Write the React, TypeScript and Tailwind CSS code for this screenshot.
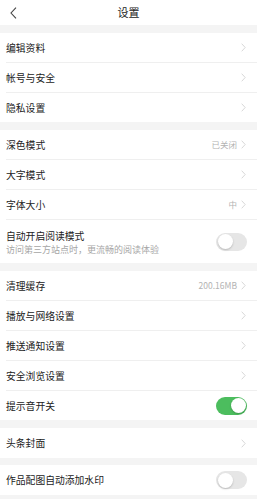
import { Fragment } from 'react'

type Row = {
  label: string
  sub?: string
  value?: string
  kind: 'arrow' | 'on' | 'off'
}

const groups: Row[][] = [
  [
    { label: '编辑资料', kind: 'arrow' },
    { label: '帐号与安全', kind: 'arrow' },
    { label: '隐私设置', kind: 'arrow' },
  ],
  [
    { label: '深色模式', value: '已关闭', kind: 'arrow' },
    { label: '大字模式', kind: 'arrow' },
    { label: '字体大小', value: '中', kind: 'arrow' },
    { label: '自动开启阅读模式', sub: '访问第三方站点时，更流畅的阅读体验', kind: 'off' },
  ],
  [
    { label: '清理缓存', value: '200.16MB', kind: 'arrow' },
    { label: '播放与网络设置', kind: 'arrow' },
    { label: '推送通知设置', kind: 'arrow' },
    { label: '安全浏览设置', kind: 'arrow' },
    { label: '提示音开关', kind: 'on' },
  ],
  [{ label: '头条封面', kind: 'arrow' }],
  [{ label: '作品配图自动添加水印', kind: 'off' }],
]

function Chevron() {
  return (
    <svg width="5" height="9" viewBox="0 0 5 9" fill="none" className="ml-[4px]">
      <path d="M0.7 0.7 L4.2 4.5 L0.7 8.3" stroke="#d4d4d4" strokeWidth="0.9" />
    </svg>
  )
}

function Toggle({ on }: { on: boolean }) {
  return (
    <div
      className={`w-[31px] h-[18px] rounded-full p-[1.5px] flex ${
        on ? 'bg-[#4cbd5e] justify-end' : 'bg-[#e6e6e6] justify-start'
      }`}
    >
      <div className="w-[15px] h-[15px] rounded-full bg-white shadow-[0_1px_2px_rgba(0,0,0,0.2)]" />
    </div>
  )
}

export default function App() {
  return (
    <div
      className="w-[257px] h-[499px] overflow-hidden bg-[#f4f4f4] flex flex-col"
      style={{ fontFamily: '"Noto Sans CJK SC", "Noto Sans", sans-serif' }}
    >
      <div className="h-[25px] bg-white relative flex items-center justify-center">
        <svg width="7" height="12" viewBox="0 0 7 12" fill="none" className="absolute left-[10px] top-[7px]">
          <path d="M6 0.6 L1 6 L6 11.4" stroke="#444" strokeWidth="1.1" />
        </svg>
        <span className="text-[11px] text-[#222]">设置</span>
      </div>

      {groups.map((rows, gi) => (
        <div key={gi} className={`bg-white ${gi === 4 ? 'mt-[7px]' : 'mt-[8px]'}`}>
          {rows.map((r, ri) => (
            <Fragment key={r.label}>
              {ri > 0 && <div className="h-px bg-[#efefef] ml-[6px]" />}
              <div
                className={`flex items-center justify-between pl-[6px] pr-[11px] ${
                  r.sub ? 'h-[43px]' : rows.length === 1 ? 'h-[30px]' : 'h-[29px]'
                }`}
              >
                <div className="flex flex-col">
                  <span className="text-[9.8px] leading-[14px] text-[#222]">{r.label}</span>
                  {r.sub && (
                    <span className="text-[9px] leading-[11px] text-[#a6a6a6] mt-[1px] whitespace-nowrap">
                      {r.sub}
                    </span>
                  )}
                </div>
                {r.kind === 'arrow' ? (
                  <div className="flex items-center">
                    {r.value && <span className="text-[8.5px] text-[#b3b3b3]">{r.value}</span>}
                    <Chevron />
                  </div>
                ) : (
                  <div className="-mr-[1px]">
                    <Toggle on={r.kind === 'on'} />
                  </div>
                )}
              </div>
            </Fragment>
          ))}
        </div>
      ))}
    </div>
  )
}
